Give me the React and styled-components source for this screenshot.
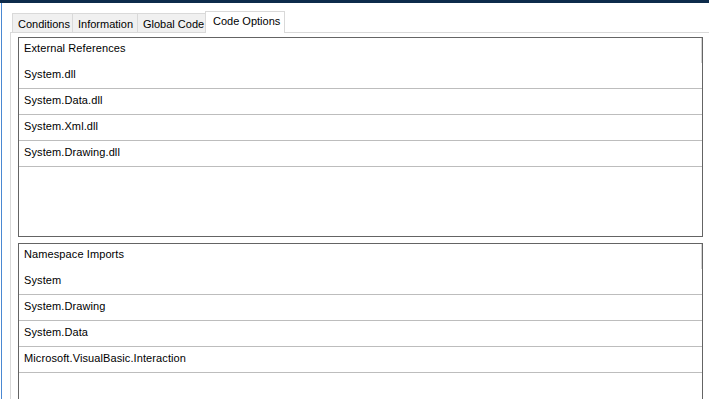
import React from 'react'
import styled, { createGlobalStyle } from 'styled-components'

const GlobalStyle = createGlobalStyle`
  html, body {
    margin: 0;
    padding: 0;
    background: #ffffff;
    overflow: hidden;
  }
  body {
    font-family: "Liberation Sans", Arial, sans-serif;
    font-size: 11px;
    letter-spacing: 0.1px;
    color: #000;
  }
`

const Window = styled.div`
  width: 709px;
  height: 399px;
  display: flex;
  flex-direction: column;
  overflow: hidden;
  background: #fff;
`

const TitleStrip = styled.div`
  height: 3px;
  flex: none;
  background: #0d2b4b;
`

const Frame = styled.div`
  flex: 1;
  display: flex;
  margin-left: 1px;
  border-left: 1px solid #4a88d2;
  min-height: 0;
`

const TabControl = styled.div`
  flex: 1;
  display: flex;
  flex-direction: column;
  margin-left: 8px;
  padding-top: 8px;
  min-height: 0;
`

const TabStrip = styled.div`
  display: flex;
  align-items: flex-end;
  height: 21px;
  padding-left: 2px;
  position: relative;
  z-index: 1;
`

const Tab = styled.div`
  box-sizing: border-box;
  width: ${(p) => p.$w}px;
  height: ${(p) => (p.$active ? 22 : 19)}px;
  margin-bottom: ${(p) => (p.$active ? -1 : 0)}px;
  padding-left: ${(p) => (p.$active ? 7 : 5)}px;
  padding-top: ${(p) => (p.$active ? 2 : 3)}px;
  line-height: 14px;
  letter-spacing: 0;
  background: ${(p) => (p.$active ? '#ffffff' : '#f0f0f0')};
  border: 1px solid #d9d9d9;
  border-bottom: none;
  margin-left: ${(p) => (p.$first ? 0 : -1)}px;
  white-space: nowrap;
  overflow: hidden;
`

const TabPage = styled.div`
  flex: 1;
  border-top: 1px solid #d9d9d9;
  border-left: 1px solid #d9d9d9;
  padding: 4px 6px 0 7px;
  display: flex;
  flex-direction: column;
  gap: 6px;
  min-height: 0;
`

const ListBox = styled.div`
  box-sizing: border-box;
  flex: none;
  height: ${(p) => p.$h}px;
  width: 685px;
  border: 1px solid #646464;
  display: flex;
  flex-direction: column;
  overflow: hidden;
`

const ListHeader = styled.div`
  height: 25px;
  flex: none;
  box-sizing: border-box;
  padding: 2px 0 0 5px;
  line-height: 16px;
  border-right: 1px solid #d4d4d4;
`

const Row = styled.div`
  flex: none;
  height: 21px;
  padding: 4px 0 0 5px;
  line-height: 15px;
  border-bottom: 1px solid #bdbdbd;
`

const tabs = [
  { label: 'Conditions', w: 61 },
  { label: 'Information', w: 66 },
  { label: 'Global Code', w: 69 },
  { label: 'Code Options', w: 80, active: true },
]

const references = ['System.dll', 'System.Data.dll', 'System.Xml.dll', 'System.Drawing.dll']
const imports = ['System', 'System.Drawing', 'System.Data', 'Microsoft.VisualBasic.Interaction']

const App = () => {
  return (
    <>
      <GlobalStyle />
      <Window>
        <TitleStrip />
        <Frame>
          <TabControl>
            <TabStrip>
              {tabs.map((t, i) => (
                <Tab key={t.label} $w={t.w} $active={t.active} $first={i === 0}>
                  {t.label}
                </Tab>
              ))}
            </TabStrip>
            <TabPage>
              <ListBox $h={200}>
                <ListHeader>External References</ListHeader>
                {references.map((r) => (
                  <Row key={r}>{r}</Row>
                ))}
              </ListBox>
              <ListBox $h={200}>
                <ListHeader>Namespace Imports</ListHeader>
                {imports.map((r) => (
                  <Row key={r}>{r}</Row>
                ))}
              </ListBox>
            </TabPage>
          </TabControl>
        </Frame>
      </Window>
    </>
  )
}

export default App
